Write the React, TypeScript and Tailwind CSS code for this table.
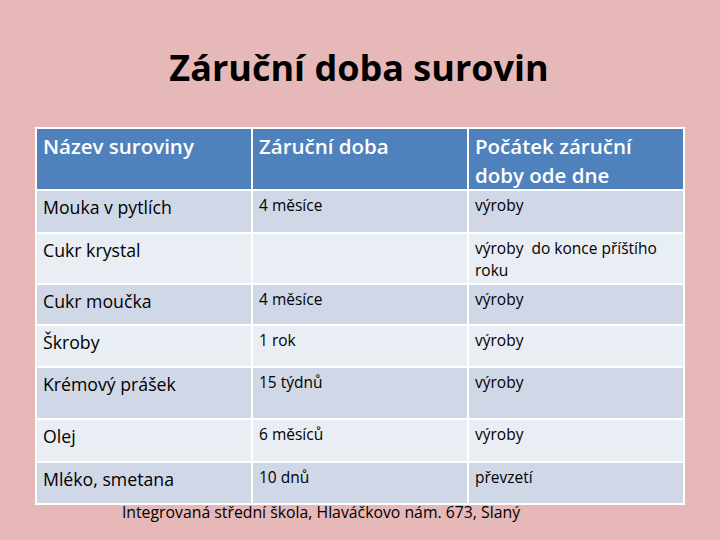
const rows: { name: string; term: string; start: string; h: string; tone: "dark" | "light" }[] = [
  { name: "Mouka v pytlích", term: "4 měsíce", start: "výroby", h: "h-[41px]", tone: "dark" },
  { name: "Cukr krystal", term: "", start: "výroby  do konce příštího roku", h: "h-[49px]", tone: "light" },
  { name: "Cukr moučka", term: "4 měsíce", start: "výroby", h: "h-[39px]", tone: "dark" },
  { name: "Škroby", term: "1 rok", start: "výroby", h: "h-[40px]", tone: "light" },
  { name: "Krémový prášek", term: "15 týdnů", start: "výroby", h: "h-[50px]", tone: "dark" },
  { name: "Olej", term: "6 měsíců", start: "výroby", h: "h-[41px]", tone: "light" },
  { name: "Mléko, smetana", term: "10 dnů", start: "převzetí", h: "h-[40px]", tone: "dark" },
];

export default function App() {
  return (
    <div className="flex h-[540px] w-[720px] flex-col items-center bg-[#e6b8b7] font-['Open_Sans','Liberation_Sans',sans-serif] text-black">
      <h1 className="mt-[44px] pr-[2px] text-[36px] font-bold leading-[48px]">Záruční doba surovin</h1>

      <div className="mt-[35px] grid w-[650px] grid-cols-3 gap-[2px] border-2 border-white bg-white">
        <div className="h-[60px] bg-[#4f81bd] px-[6px] pt-[3px] text-[20.5px] font-semibold leading-[29px] text-white">Název suroviny</div>
        <div className="h-[60px] bg-[#4f81bd] px-[6px] pt-[3px] text-[20.5px] font-semibold leading-[29px] text-white">Záruční doba</div>
        <div className="h-[60px] bg-[#4f81bd] px-[6px] pt-[3px] text-[20.5px] font-semibold leading-[29px] text-white">
          Počátek záruční doby ode dne
        </div>

        {rows.map((r) => {
          const bg = r.tone === "dark" ? "bg-[#d0d8e8]" : "bg-[#e9edf4]";
          return (
            <div key={r.name} className="contents">
              <div className={`${r.h} ${bg} px-[6px] pt-[3px] text-[17.7px] leading-[26px]`}>{r.name}</div>
              <div className={`${r.h} ${bg} px-[6px] pt-[3px] text-[15.5px] leading-[22px]`}>{r.term}</div>
              <div className={`${r.h} ${bg} whitespace-pre-wrap px-[6px] pt-[3px] text-[15.5px] leading-[22px]`}>{r.start}</div>
            </div>
          );
        })}
      </div>

      <p className="mt-[-3px] pr-[78px] text-[15.8px] leading-[20px]">Integrovaná střední škola, Hlaváčkovo nám. 673, Slaný</p>
    </div>
  );
}
